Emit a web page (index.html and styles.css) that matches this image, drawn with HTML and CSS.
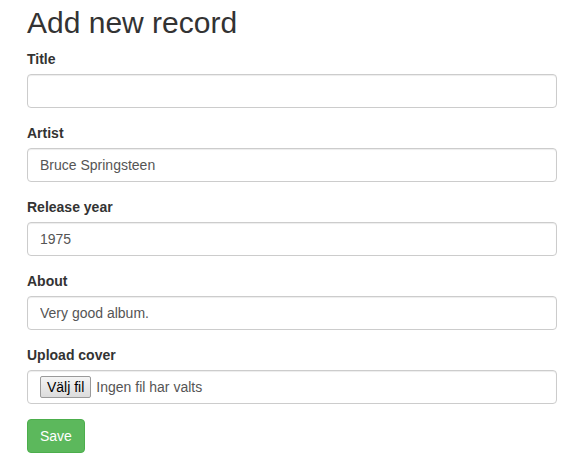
FILE: index.html
```html
<!DOCTYPE html>
<html>
<head>
<meta charset="utf-8">
<link rel="stylesheet" href="styles.css">
</head>
<body>
<div class="container">
  <h1 class="title">Add new record</h1>
  <form class="form">
    <div class="form-group">
      <label class="label">Title</label>
      <input class="form-control" type="text" value="">
    </div>
    <div class="form-group">
      <label class="label">Artist</label>
      <input class="form-control" type="text" value="Bruce Springsteen">
    </div>
    <div class="form-group">
      <label class="label">Release year</label>
      <input class="form-control" type="text" value="1975">
    </div>
    <div class="form-group">
      <label class="label">About</label>
      <input class="form-control" type="text" value="Very good album.">
    </div>
    <div class="form-group">
      <label class="label">Upload cover</label>
      <div class="form-control file-control">
        <span class="file-btn">Välj fil</span>
        <span class="file-text">Ingen fil har valts</span>
      </div>
    </div>
    <button class="btn-success" type="button">Save</button>
  </form>
</div>
</body>
</html>
```
FILE: styles.css
```css
* { box-sizing: border-box; }
html, body {
  margin: 0;
  padding: 0;
  background: #fff;
}
body {
  font-family: "Liberation Sans", Arial, sans-serif;
  font-size: 14px;
  line-height: 1.42857;
  color: #333;
}
.container {
  width: 530px;
  margin-left: 27px;
  padding-top: 6px;
}
.title {
  font-size: 30px;
  font-weight: 500;
  line-height: 33px;
  margin: 0 0 10px 0;
  color: #333;
}
.form { margin: 0; }
.form-group {
  margin-bottom: 15px;
}
.label {
  display: block;
  font-weight: bold;
  line-height: 20px;
  margin-bottom: 5px;
}
.form-control {
  display: block;
  width: 100%;
  height: 34px;
  padding: 6px 12px;
  font-family: inherit;
  font-size: 14px;
  line-height: 20px;
  color: #555;
  background: #fff;
  border: 1px solid #ccc;
  border-radius: 4px;
  box-shadow: inset 0 1px 1px rgba(0,0,0,0.075);
  margin: 0;
}
.file-control {
  display: flex;
  align-items: center;
  gap: 5px;
  padding: 0 12px;
}
.file-btn {
  display: inline-block;
  height: 22px;
  line-height: 20px;
  padding: 0 6px;
  color: #000;
  background: linear-gradient(#f4f4f4, #dcdcdc);
  border: 1px solid #9a9a9a;
  border-radius: 2px;
  font-size: 14px;
}
.file-text {
  color: #555;
}
.btn-success {
  display: block;
  height: 34px;
  padding: 6px 12px;
  font-family: inherit;
  font-size: 14px;
  line-height: 20px;
  color: #fff;
  background: #5cb85c;
  border: 1px solid #4cae4c;
  border-radius: 4px;
  margin: 0;
}
```
